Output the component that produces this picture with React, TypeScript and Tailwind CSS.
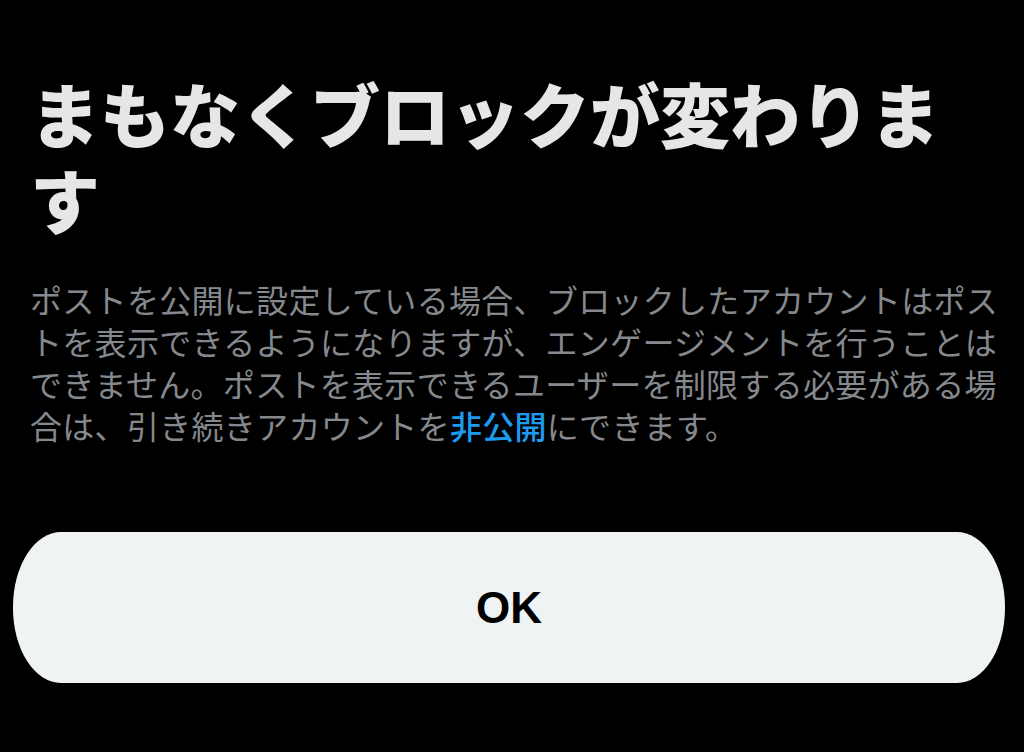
export default function App() {
  return (
    <div className="min-h-screen w-full bg-black overflow-hidden font-['Noto_Sans_CJK_JP',sans-serif]">
      <div className="pl-[30px] pr-[20px] pt-[70px]">
        {/* Title */}
        <h1 className="w-[960px] text-[70px] leading-[86px] font-black text-[#e4e6e7]">
          まもなくブロックが変わります
        </h1>

        {/* Description */}
        <p className="mt-[36px] w-[978px] text-[32px] leading-[42px] tracking-[0.3px] text-[#85898e]">
          ポストを公開に設定している場合、ブロックしたアカウントはポストを表示できるようになりますが、エンゲージメントを行うことはできません。ポストを表示できるユーザーを制限する必要がある場合は、引き続きアカウントを<span className="text-[#1d9bf0] font-medium">非公開</span>にできます。
        </p>
      </div>

      {/* OK button */}
      <div className="mt-[86px] pl-[13px] pr-[19px]">
        <button className="w-full h-[151px] bg-[#eff3f4] rounded-[48px/75px] flex items-center justify-center">
          <span className="font-['Liberation_Sans',Arial,sans-serif] font-bold text-[44px] text-black leading-none">
            OK
          </span>
        </button>
      </div>
    </div>
  );
}
